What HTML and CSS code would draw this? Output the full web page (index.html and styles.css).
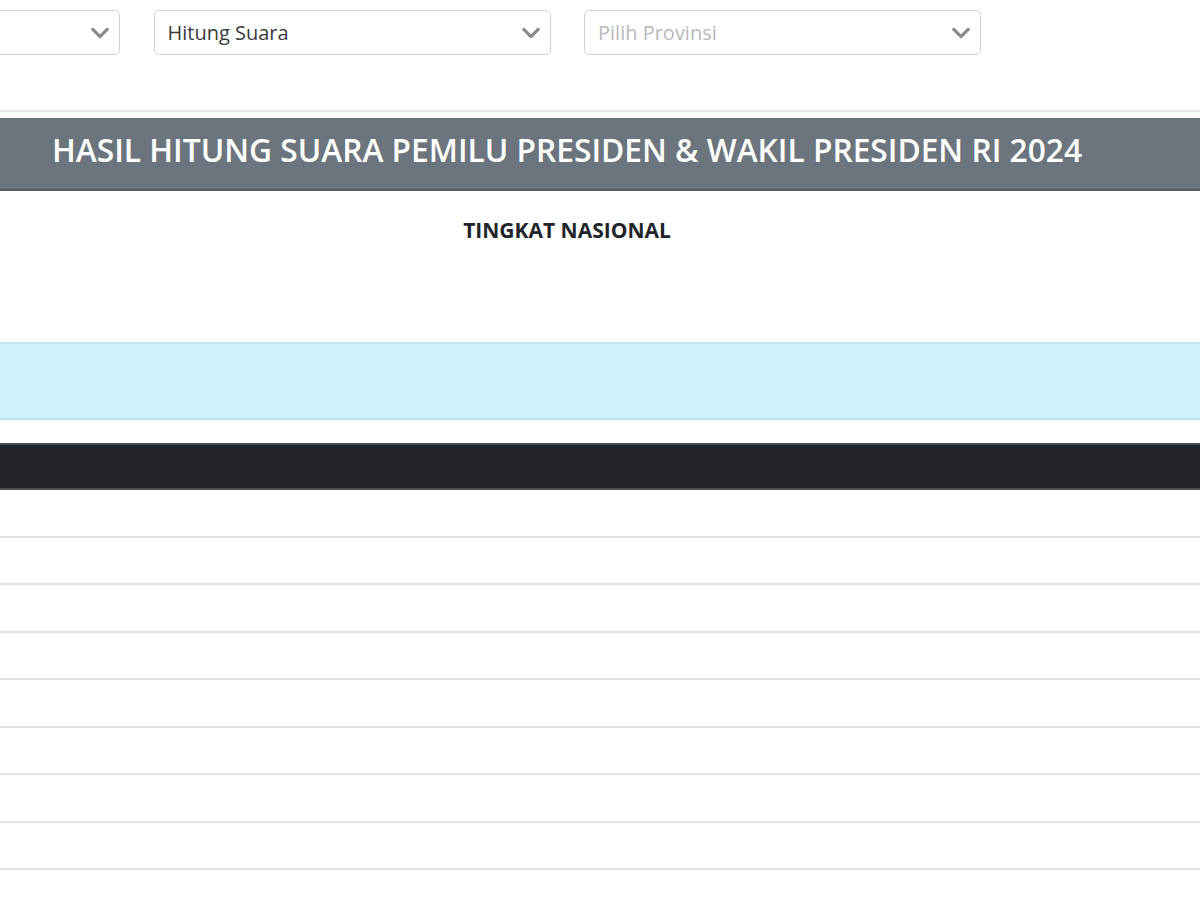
FILE: index.html
```html
<!DOCTYPE html>
<html lang="id">
<head>
<meta charset="utf-8">
<title>Hasil Hitung Suara</title>
<link rel="stylesheet" href="styles.css">
</head>
<body>
<div class="page">
  <div class="filters">
    <div class="select"><span class="value"></span><svg class="chev" viewBox="0 0 20 12"><path d="M2 2 L10 10 L18 2" /></svg></div>
    <div class="select"><span class="value">Hitung Suara</span><svg class="chev" viewBox="0 0 20 12"><path d="M2 2 L10 10 L18 2" /></svg></div>
    <div class="select"><span class="value placeholder">Pilih Provinsi</span><svg class="chev" viewBox="0 0 20 12"><path d="M2 2 L10 10 L18 2" /></svg></div>
  </div>
  <hr class="divider">
  <div class="title-bar"><h1>HASIL HITUNG SUARA PEMILU PRESIDEN &amp; WAKIL PRESIDEN RI 2024</h1></div>
  <h2 class="level">TINGKAT NASIONAL</h2>
  <div class="alert"></div>
  <div class="table">
    <div class="thead"></div>
    <div class="row"></div>
    <div class="row"></div>
    <div class="row"></div>
    <div class="row"></div>
    <div class="row"></div>
    <div class="row"></div>
    <div class="row"></div>
    <div class="row"></div>
  </div>
</div>
</body>
</html>
```
FILE: styles.css
```css
html, body {
  margin: 0;
  padding: 0;
  background: #ffffff;
  overflow: hidden;
}
body {
  font-family: "Open Sans", "Noto Sans", sans-serif;
  color: #212529;
}
.page {
  width: 1200px;
}
.filters {
  display: flex;
  gap: 33.5px;
  margin-left: -277px;
  padding-top: 10px;
}
.select {
  width: 397px;
  height: 45px;
  box-sizing: border-box;
  border: 1px solid #cfd3d7;
  border-radius: 5px;
  display: flex;
  align-items: center;
  justify-content: space-between;
  padding: 0 10px 0 13px;
  flex: none;
}
.value {
  font-size: 20px;
  color: #3a3a3a;
  line-height: 1;
}
.value.placeholder {
  color: #b9b9b9;
}
.chev {
  width: 18px;
  height: 12px;
}
.chev path {
  fill: none;
  stroke: #8a8a8a;
  stroke-width: 3.5;
  stroke-linecap: round;
  stroke-linejoin: round;
}
.divider {
  margin: 55px 0 0;
  border: 0;
  border-top: 2px solid #e9e9e9;
  height: 0;
}
.title-bar {
  margin-top: 6px;
  height: 73px;
  box-sizing: border-box;
  background: #6c757d;
  border-bottom: 2px solid #575d63;
  display: flex;
  align-items: center;
  justify-content: center;
  padding-right: 66px;
  padding-bottom: 6px;
}
.title-bar h1 {
  margin: 0;
  color: #ffffff;
  font-size: 31.7px;
  font-weight: 600;
  letter-spacing: 0;
  line-height: 1.2;
  white-space: nowrap;
}
.level {
  margin: 26px 0 0;
  text-align: center;
  padding-right: 66px;
  font-size: 21px;
  font-weight: 700;
  line-height: 26px;
  color: #212529;
}
.alert {
  margin-top: 99px;
  height: 78px;
  box-sizing: border-box;
  background: #cff4fc;
  border-top: 2px solid #bfe6ee;
  border-bottom: 2px solid #bfe2ea;
}
.table {
  margin-top: 23px;
}
.thead {
  height: 47px;
  box-sizing: border-box;
  background: #212529;
  border-top: 2px solid #4a4d51;
  border-bottom: 2px solid #4a4d51;
}
.row {
  height: 47.5px;
  box-sizing: border-box;
  border-bottom: 2px solid #e4e4e4;
}
```
